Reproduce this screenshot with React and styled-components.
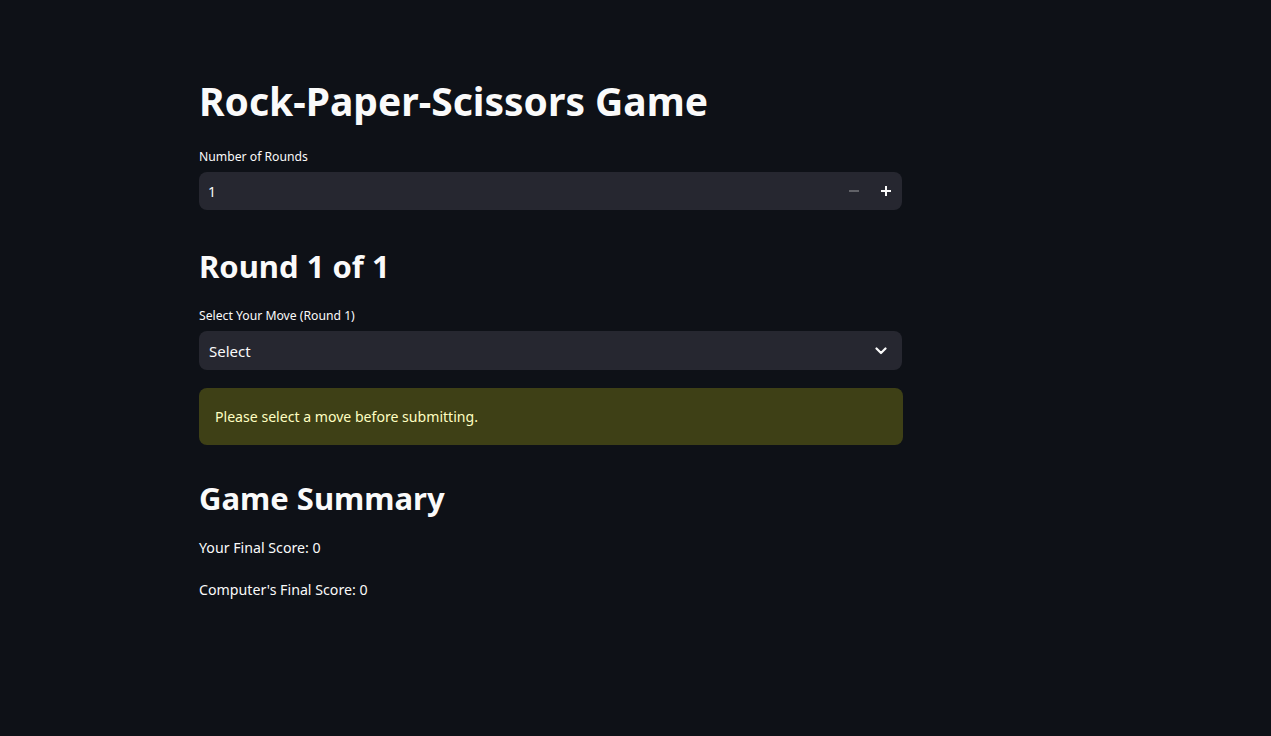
import React from "react";
import styled, { createGlobalStyle } from "styled-components";

const Global = createGlobalStyle`
  html, body { margin: 0; padding: 0; background: #0e1117; }
  body { font-family: "Noto Sans", "Liberation Sans", sans-serif; color: #fafafa; }
  * { box-sizing: border-box; }
`;

const Page = styled.div`
  min-height: 736px;
  background: #0e1117;
  padding: 77px 0 0 199px;
`;

const Main = styled.main`
  width: 704px;
  display: flex;
  flex-direction: column;
`;

const Title = styled.h1`
  margin: 0;
  font-size: 39px;
  font-weight: 700;
  line-height: 48px;
  color: #fafafa;
`;

const Header = styled.h2`
  margin: ${(p) => p.$mt || 0}px 0 0;
  font-size: 31px;
  font-weight: 700;
  line-height: 40px;
  color: #fafafa;
`;

const Label = styled.label`
  display: block;
  margin-top: ${(p) => p.$mt || 0}px;
  font-size: 12.2px;
  line-height: 20px;
  color: #fafafa;
`;

const Field = styled.div`
  margin-top: ${(p) => p.$mt || 0}px;
  height: ${(p) => p.$h}px;
  width: 703px;
  background: #262730;
  border-radius: 8px;
  display: flex;
  align-items: center;
  padding-left: ${(p) => p.$pl}px;
`;

const Value = styled.span`
  flex: 1;
  font-size: ${(p) => p.$fs}px;
  color: #fafafa;
`;

const StepButton = styled.button`
  width: 32px;
  height: 100%;
  border: 0;
  background: transparent;
  padding: 0;
  display: flex;
  align-items: center;
  justify-content: center;
  color: ${(p) => (p.$dim ? "rgba(250,250,250,0.4)" : "#fafafa")};
`;

const Chevron = styled.span`
  width: 42px;
  display: flex;
  align-items: center;
  justify-content: center;
`;

const Warning = styled.div`
  margin-top: 18px;
  width: 704px;
  height: 57px;
  border-radius: 8px;
  background: rgba(255, 255, 18, 0.2);
  color: #ffffc2;
  display: flex;
  align-items: center;
  padding-left: 16px;
  font-size: 14.1px;
`;

const Text = styled.p`
  margin: ${(p) => p.$mt || 0}px 0 0;
  font-size: 14.2px;
  line-height: 24px;
  color: #fafafa;
`;

export default function App() {
  return (
    <>
      <Global />
      <Page>
        <Main>
          <Title>Rock-Paper-Scissors Game</Title>
          <Label $mt={22}>Number of Rounds</Label>
          <Field $mt={5} $h={38} $pl={9}>
            <Value $fs={14}>1</Value>
            <StepButton $dim aria-label="minus">
              <svg width="10" height="10" viewBox="0 0 10 10">
                <rect x="0" y="4.3" width="10" height="1.4" fill="currentColor" />
              </svg>
            </StepButton>
            <StepButton aria-label="plus">
              <svg width="10" height="10" viewBox="0 0 10 10">
                <rect x="0" y="4" width="10" height="2" fill="currentColor" />
                <rect x="4" y="0" width="2" height="10" fill="currentColor" />
              </svg>
            </StepButton>
          </Field>
          <Header $mt={36}>Round 1 of 1</Header>
          <Label $mt={20}>Select Your Move (Round 1)</Label>
          <Field $mt={5} $h={39} $pl={10}>
            <Value $fs={15}>Select</Value>
            <Chevron>
              <svg width="12" height="8" viewBox="0 0 12 8">
                <path d="M1.5 1.5 L6 6 L10.5 1.5" fill="none" stroke="#fafafa" strokeWidth="2.2" strokeLinecap="round" strokeLinejoin="round" />
              </svg>
            </Chevron>
          </Field>
          <Warning>Please select a move before submitting.</Warning>
          <Header $mt={33}>Game Summary</Header>
          <Text $mt={18}>Your Final Score: 0</Text>
          <Text $mt={18}>Computer's Final Score: 0</Text>
        </Main>
      </Page>
    </>
  );
}
